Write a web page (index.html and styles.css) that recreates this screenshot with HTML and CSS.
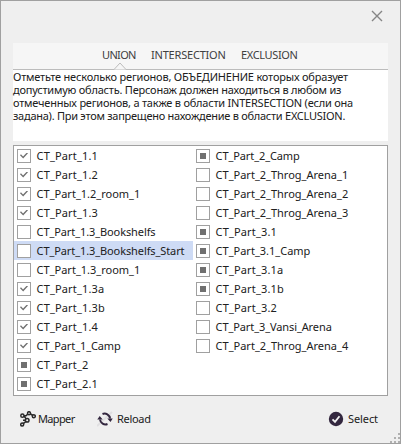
FILE: index.html
```html
<!DOCTYPE html>
<html lang="ru">
<head>
<meta charset="utf-8">
<title>Regions</title>
<link rel="stylesheet" href="styles.css">
</head>
<body>
<main class="window">
  <header class="titlebar">
    <svg class="close" viewBox="0 0 12 12"><path d="M1 1l10 10M11 1L1 11"/></svg>
  </header>
  <nav class="tabs">
    <span class="tab union">UNION<svg class="pointer" viewBox="0 0 14 8"><path d="M0 7.5H1L7 1l6 6.500h1"/></svg></span>
    <span class="tab intersection">INTERSECTION</span>
    <span class="tab exclusion">EXCLUSION</span>
  </nav>
  <section class="description">
    <div class="line-1">Отметьте несколько регионов, ОБЪЕДИНЕНИЕ которых образует</div>
    <div class="line-2">допустимую область. Персонаж должен находиться в любом из</div>
    <div class="line-3">отмеченных регионов, а также в области INTERSECTION (если она</div>
    <div class="line-4">задана). При этом запрещено нахождение в области EXCLUSION.</div>
  </section>
  <section class="list">
    <div class="column">
      <div class="item short"><i class="box checked"></i>CT_Part_1.1</div>
      <div class="item short"><i class="box checked"></i>CT_Part_1.2</div>
      <div class="item"><i class="box checked"></i>CT_Part_1.2_room_1</div>
      <div class="item short"><i class="box checked"></i>CT_Part_1.3</div>
      <div class="item long"><i class="box"></i>CT_Part_1.3_Bookshelfs</div>
      <div class="item long selected"><i class="box"></i>CT_Part_1.3_Bookshelfs_Start</div>
      <div class="item"><i class="box"></i>CT_Part_1.3_room_1</div>
      <div class="item short"><i class="box checked"></i>CT_Part_1.3a</div>
      <div class="item short"><i class="box checked"></i>CT_Part_1.3b</div>
      <div class="item short"><i class="box checked"></i>CT_Part_1.4</div>
      <div class="item camp"><i class="box checked"></i>CT_Part_1_Camp</div>
      <div class="item short"><i class="box mixed"></i>CT_Part_2</div>
      <div class="item short"><i class="box mixed"></i>CT_Part_2.1</div>
    </div>
    <div class="column">
      <div class="item camp"><i class="box mixed"></i>CT_Part_2_Camp</div>
      <div class="item"><i class="box"></i>CT_Part_2_Throg_Arena_1</div>
      <div class="item"><i class="box"></i>CT_Part_2_Throg_Arena_2</div>
      <div class="item"><i class="box"></i>CT_Part_2_Throg_Arena_3</div>
      <div class="item short"><i class="box mixed"></i>CT_Part_3.1</div>
      <div class="item"><i class="box mixed"></i>CT_Part_3.1_Camp</div>
      <div class="item short"><i class="box mixed"></i>CT_Part_3.1a</div>
      <div class="item short"><i class="box mixed"></i>CT_Part_3.1b</div>
      <div class="item short"><i class="box"></i>CT_Part_3.2</div>
      <div class="item camp"><i class="box"></i>CT_Part_3_Vansi_Arena</div>
      <div class="item"><i class="box"></i>CT_Part_2_Throg_Arena_4</div>
    </div>
  </section>
  <footer class="actions">
    <button class="mapper"><svg viewBox="0 0 16 16"><g fill="#efefef" stroke="#2a2a2a" stroke-width="1.500"><path fill="none" d="M2.300 4.700H6L9 2l4.700 3M4 5l3.300 4.300L2 13.700M3 9.300h4"/><circle cx="2.400" cy="4.700" r="1.600"/><circle cx="9" cy="2.200" r="1.500"/><circle cx="13.800" cy="5.200" r="1.500"/><circle cx="7.200" cy="9.300" r="1.800"/><circle cx="2.200" cy="13.600" r="1.500"/></g></svg><span>Mapper</span></button>
    <button class="reload"><svg viewBox="0 0 16 16"><path d="M0 15L15 1" stroke="#e0dfe1" stroke-width="2"/><g fill="none" stroke="#33273f" stroke-width="2"><path d="M5.500 3A5.500 5.500 0 0 1 13 7.500M10.500 13A5.500 5.500 0 0 1 3 8.500"/></g><path fill="#33273f" d="M10.300 7.500h5.400l-2.200 3.500zM.3 8.500h5.400L2.700 5z"/></svg><span>Reload</span></button>
    <button class="select"><svg viewBox="0 0 16 16"><circle cx="8" cy="8" r="7.200" fill="#33273f"/><path d="M4.500 8.300l2.500 2.500 4.500-5.500" fill="none" stroke="#f2f2f2" stroke-width="1.800"/></svg><span>Select</span></button>
  </footer>
  <svg class="grip" viewBox="0 0 11 11"><path fill="#b0b0b0" d="M8 0h2v2H8zM4 4h2v2H4zM8 4h2v2H8zM0 8h2v2H0zM4 8h2v2H4zM8 8h2v2H8z"/></svg>
</main>
</body>
</html>
```

FILE: styles.css
```css
* { box-sizing: border-box; }
body {
  margin: 0;
  font: 11px "Noto Sans", sans-serif;
  color: #202020;
}
.window {
  position: relative;
  width: 401px;
  height: 444px;
  padding: 0 12px;
  border: 1px solid #a0a0a0;
  background: #efefef;
  overflow: hidden;
}
.titlebar {
  display: flex;
  justify-content: flex-end;
  height: 42px;
  padding: 9px 5px 0 0;
}
.close {
  width: 12px;
  height: 12px;
  fill: none;
  stroke: #858585;
  stroke-width: 1.4;
}
.tabs {
  display: flex;
  gap: 16px;
  height: 27px;
  padding-left: 89px;
  border-bottom: 1px solid #bcbcbc;
  background: #f6f6f6;
  color: #404040;
  line-height: 23px;
}
.tab { position: relative; height: 27px; }
.union { width: 33px; letter-spacing: -0.65px; }
.intersection { width: 74px; letter-spacing: -0.2px; }
.exclusion { letter-spacing: -0.35px; }
.pointer {
  position: absolute;
  left: 11px;
  top: 19px;
  width: 14px;
  height: 8px;
  fill: #f6f6f6;
  stroke: #bcbcbc;
}
.description {
  width: 375px;
  height: 71px;
  background: #fff;
  line-height: 13px;
  white-space: nowrap;
}
.line-1 { letter-spacing: -0.19px; }
.line-2 { letter-spacing: -0.22px; }
.line-3 { letter-spacing: -0.22px; }
.line-4 { letter-spacing: -0.26px; }
.list {
  display: grid;
  grid-template-columns: 179px 1fr;
  width: 375px;
  height: 251px;
  margin-top: 4px;
  border: 1px solid #a0a0a0;
  background: #fff;
}
.item {
  display: flex;
  align-items: center;
  gap: 5.6px;
  height: 19px;
  padding-left: 3px;
  line-height: 19px;
  white-space: nowrap;
}
.short { letter-spacing: 0.15px; }
.long { letter-spacing: -0.1px; }
.camp { letter-spacing: -0.1px; }
.selected { background: #cedbf5; }
.box {
  display: grid;
  place-items: center;
  flex: none;
  width: 14px;
  height: 14px;
  border: 1px solid #a0a0a0;
  background: #fff;
}
.mixed::after {
  content: "";
  width: 6px;
  height: 6px;
  background: #707070;
}
.checked::after {
  content: "";
  width: 8px;
  height: 6px;
  background: #707070;
  clip-path: polygon(0 45%, 12% 30%, 38% 66%, 86% 0, 100% 14%, 40% 100%);
}
.actions {
  display: flex;
  align-items: center;
  height: 16px;
  margin-top: 15px;
  padding-left: 7px;
}
button {
  display: flex;
  align-items: center;
  padding: 0;
  border: 0;
  background: none;
  font: inherit;
  color: inherit;
  line-height: 16px;
}
button svg { width: 16px; height: 16px; }
.mapper { width: 77px; gap: 2px; letter-spacing: -0.65px; }
.reload { gap: 4px; letter-spacing: -0.3px; }
.select { width: 52px; gap: 4px; margin-left: auto; margin-right: 8px; letter-spacing: -0.1px; }
.grip {
  position: absolute;
  right: -1px;
  bottom: -1px;
  width: 11px;
  height: 11px;
}
```
